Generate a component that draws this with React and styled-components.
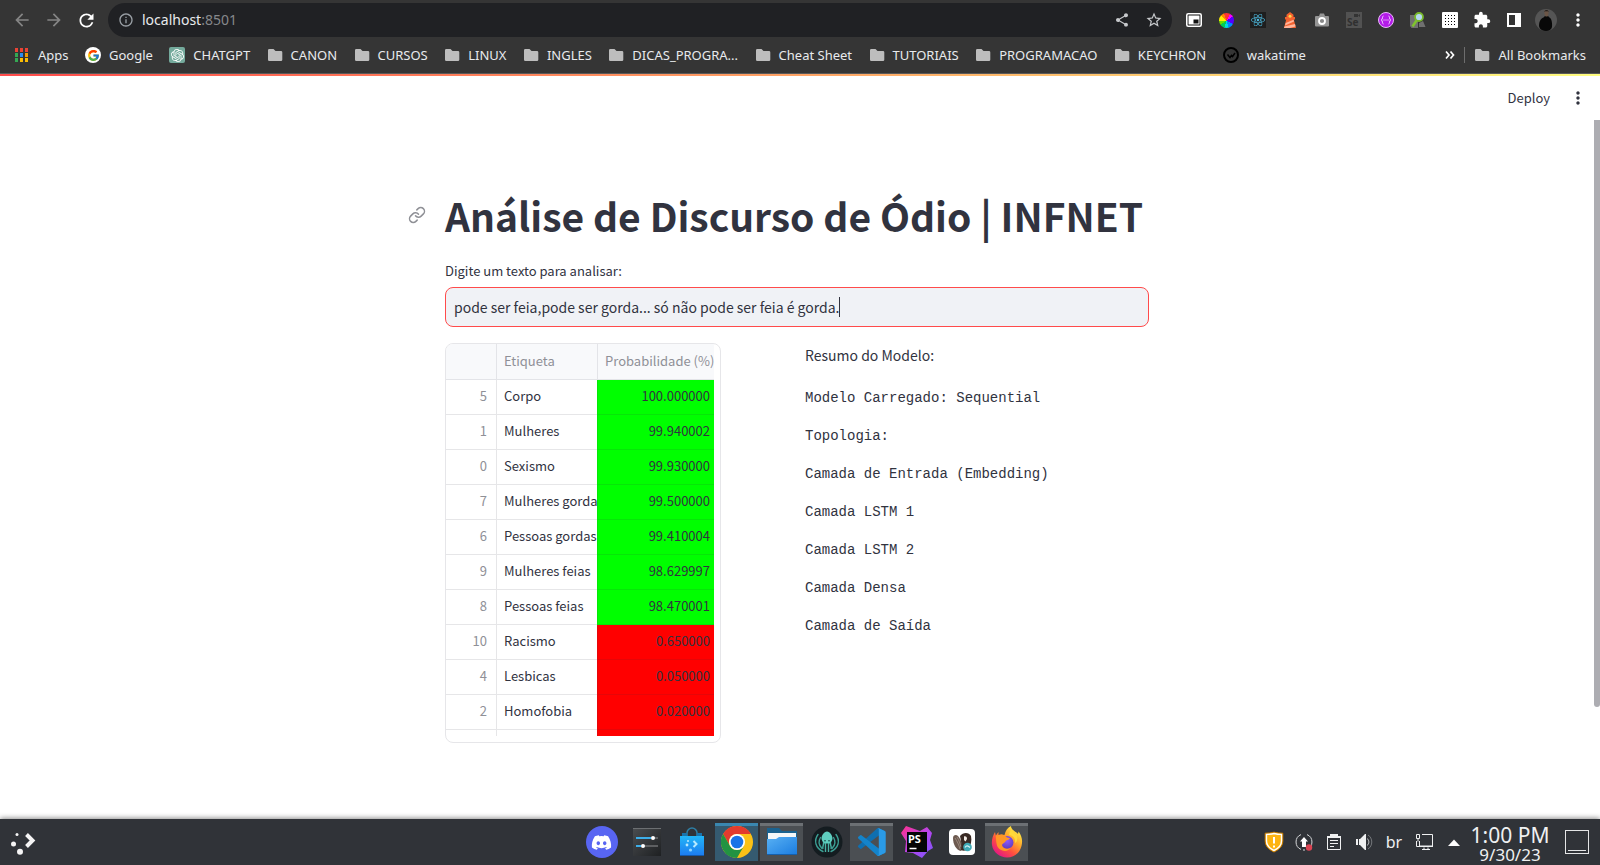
import React from "react";
import styled, { createGlobalStyle } from "styled-components";
import { FaDiscord, FaReact } from "react-icons/fa";
import { FcGoogle } from "react-icons/fc";
import { SiOpenai } from "react-icons/si";
import {
  MdArrowBack,
  MdArrowForward,
  MdRefresh,
  MdInfoOutline,
  MdShare,
  MdStarBorder,
  MdMoreVert,
  MdExtension,
} from "react-icons/md";
import { Link as LinkIcon } from "lucide-react";

const chromeFont = `"Noto Sans", "Open Sans", sans-serif`;
const appFont = `"Noto Sans CJK JP", "Noto Sans", sans-serif`;
const monoFont = `"Liberation Mono", monospace`;

const GlobalStyle = createGlobalStyle`
  * { box-sizing: border-box; }
  body { margin: 0; background: #ffffff; font-family: ${appFont}; color: #31333f; }
  button, input { font: inherit; color: inherit; margin: 0; padding: 0; border: 0; background: none; }
  a { color: inherit; text-decoration: none; }
  svg { display: block; flex: none; }
`;

const Desktop = styled.div`
  display: flex;
  flex-direction: column;
  min-height: 100vh;
`;

/* ---------- browser ---------- */

const BrowserBar = styled.header`
  background: #353535;
  border-bottom: 1px solid #5a5a5a;
  color: #e8eaed;
  font-family: ${chromeFont};
`;

const NavRow = styled.div`
  display: flex;
  align-items: center;
  height: 40px;
  padding: 0 6px;
`;

const ToolButton = styled.button`
  display: flex;
  align-items: center;
  justify-content: center;
  flex: none;
  width: 32px;
  height: 32px;
  color: ${(p) => p.$color || "#ffffff"};
`;

const AddressBar = styled.div`
  display: flex;
  align-items: center;
  flex: 1;
  height: 34px;
  margin: 0 6px;
  padding: 0 2px 0 10px;
  border-radius: 17px;
  background: #202124;
`;

const Address = styled.div`
  flex: 1;
  display: flex;
  align-items: center;
  margin-left: 8px;
  font-size: 14px;
  line-height: 20px;
  color: #e8eaed;
`;

const Port = styled.span`
  color: #86888b;
`;

const BookmarkRow = styled.nav`
  display: flex;
  align-items: center;
  justify-content: space-between;
  height: 33px;
  padding: 0 14px 3px;
  font-size: 13px;
  line-height: 20px;
`;

const BookmarkList = styled.div`
  display: flex;
  flex: 1;
  justify-content: space-between;
  max-width: 1292px;
`;

const BookmarkExtras = styled.div`
  display: flex;
  align-items: center;
`;

const Bookmark = styled.a`
  display: flex;
  align-items: center;
  gap: 8px;
  white-space: nowrap;
`;

const MoreBookmarks = styled.button`
  display: flex;
  width: 28px;
  height: 24px;
  align-items: center;
  justify-content: center;
`;

const Divider = styled.span`
  width: 1px;
  height: 16px;
  margin-right: 9px;
  background: #6d6d6d;
`;

/* ---------- streamlit page ---------- */

const Page = styled.div`
  flex: 1;
  display: flex;
  flex-direction: column;
  background: #ffffff;
`;

const Rainbow = styled.div`
  height: 2px;
  background: linear-gradient(90deg, #ff4b4b, #fffd80);
`;

const AppHeader = styled.div`
  display: flex;
  align-items: center;
  justify-content: flex-end;
  height: 44px;
  padding-right: 12px;
  gap: 18px;
`;

const DeployButton = styled.button`
  font-size: 13px;
  line-height: 20px;
`;

const MenuButton = styled.button`
  width: 20px;
  height: 20px;
  display: flex;
  align-items: center;
  justify-content: center;
`;

const ScrollRow = styled.div`
  flex: 1;
  display: flex;
`;

const Main = styled.main`
  flex: 1;
  padding: 67px 16px 76px;
`;

const Block = styled.div`
  max-width: 704px;
  margin: 0 auto;
`;

const Rail = styled.div`
  width: 6px;
`;

const Thumb = styled.div`
  height: 84%;
  border-radius: 0 0 3px 3px;
  background: #adadb2;
`;

const TitleRow = styled.div`
  display: flex;
  align-items: center;
  margin-left: -37px;
  margin-bottom: 18px;
`;

const TitleAnchor = styled.a`
  flex: none;
  width: 37px;
  color: #8f9096;
`;

const Title = styled.h1`
  margin: 0;
  font-size: 39px;
  line-height: 56px;
  font-weight: 700;
  white-space: nowrap;
`;

const FieldLabel = styled.label`
  display: block;
  margin-bottom: 6px;
  font-size: 13px;
  line-height: 20px;
`;

const Field = styled.div`
  display: flex;
  align-items: center;
  height: 40px;
  padding: 0 8px;
  margin-bottom: 16px;
  border: 1px solid #ff4b4b;
  border-radius: 8px;
  background: #f0f2f6;
`;

const TextInput = styled.input`
  field-sizing: content;
  max-width: 100%;
  font-size: 14px;
  line-height: 24px;
  outline: none;
`;

const Caret = styled.span`
  width: 1px;
  height: 20px;
  background: #31333f;
`;

const Columns = styled.div`
  display: grid;
  grid-template-columns: 1fr 1fr;
  gap: 16px;
`;

const GridFrame = styled.div`
  width: 276px;
  height: 400px;
  padding: 0 6px 6px 0;
  border: 1px solid #e6e6e9;
  border-radius: 8px;
  overflow: hidden;
`;

const GridViewport = styled.div`
  height: 100%;
  overflow: hidden;
`;

const DataTable = styled.table`
  width: 100%;
  table-layout: fixed;
  border-collapse: separate;
  border-spacing: 0;
  font-size: 13px;
  line-height: 20px;
`;

const HeadCell = styled.th`
  width: ${(p) => p.$width};
  height: 36px;
  padding: 0 0 2px 7px;
  border-bottom: 1px solid #e3e4e8;
  border-left: ${(p) => (p.$first ? "0" : "1px solid #e3e4e8")};
  background: #f8f9fb;
  color: #8f9097;
  font-weight: 400;
  text-align: left;
  white-space: nowrap;
`;

const Cell = styled.td`
  height: 35px;
  padding: 0 4px 2px 7px;
  border-bottom: 1px solid rgba(49, 51, 63, 0.12);
  border-left: 1px solid rgba(49, 51, 63, 0.12);
  background: ${(p) => p.$fill || "transparent"};
  text-align: ${(p) => p.$align || "left"};
  white-space: nowrap;
  overflow: hidden;
`;

const IndexCell = styled(Cell)`
  padding-right: 9px;
  border-left: 0;
  color: #8f9097;
`;

const Summary = styled.section`
  display: flex;
  flex-direction: column;
  gap: 16px;
`;

const SummaryTitle = styled.p`
  margin: 0 0 4px;
  font-size: 14px;
  line-height: 24px;
`;

const CodeLine = styled.p`
  margin: 0;
  font-family: ${monoFont};
  font-size: 14px;
  line-height: 22px;
  white-space: nowrap;
`;

/* ---------- desktop panel ---------- */

const Panel = styled.footer`
  position: relative;
  display: grid;
  grid-template-columns: 1fr auto 1fr;
  align-items: center;
  height: 46px;
  background: #303338;
  box-shadow: 0 -1px 5px rgba(0, 0, 0, 0.45);
  color: #eff0f1;
  font-family: ${chromeFont};
`;

const Launcher = styled.button`
  display: flex;
  width: 46px;
  height: 46px;
  align-items: center;
  justify-content: center;
`;

const Tasks = styled.div`
  display: flex;
  gap: 2px;
  margin-left: 8px;
`;

const Task = styled.button`
  display: flex;
  align-items: center;
  justify-content: center;
  width: 43px;
  height: 38px;
  border-top: 3px solid
    ${(p) => (p.$state === "active" ? "#3a87b0" : p.$state === "open" ? "#6c7074" : "transparent")};
  border-bottom: 3px solid
    ${(p) => (p.$state === "active" ? "#355a70" : p.$state === "open" ? "#4b4f53" : "transparent")};
  background: ${(p) =>
    p.$state === "active" ? "#355a70" : p.$state === "open" ? "#4b4f53" : "transparent"};
`;

const Tray = styled.div`
  display: flex;
  align-items: center;
  justify-content: flex-end;
  padding-right: 11px;
`;

const TrayButton = styled.button`
  display: flex;
  align-items: center;
  justify-content: center;
  width: 30px;
  height: 38px;
  font-size: 16px;
  line-height: 24px;
`;

const Clock = styled.time`
  display: flex;
  flex-direction: column;
  align-items: center;
  width: 82px;
  padding-top: 3px;
  margin-right: 14px;
  white-space: nowrap;
`;

const Hour = styled.span`
  font-size: 21px;
  line-height: 22px;
`;

const Day = styled.span`
  font-size: 17px;
  line-height: 18px;
`;

/* ---------- drawings ---------- */

const Svg = ({ size = 16, box = 16, children }) => (
  <svg width={size} height={size} viewBox={`0 0 ${box} ${box}`} fill="none" aria-hidden="true">
    {children}
  </svg>
);

const AppsIcon = () => {
  const colors = ["#ea4335", "#ea4335", "#ea4335", "#34a853", "#2a8bf2", "#f29900", "#34a853", "#fbbc04", "#fbbc04"];
  return (
    <Svg>
      {colors.map((c, i) => (
        <rect key={i} x={1 + (i % 3) * 5} y={1 + Math.floor(i / 3) * 5} width="3" height="4" fill={c} />
      ))}
    </Svg>
  );
};

const GoogleBadge = styled.span`
  display: flex;
  align-items: center;
  justify-content: center;
  width: 16px;
  height: 16px;
  border-radius: 8px;
  background: #ffffff;
`;

const ChatBadge = styled.span`
  display: flex;
  align-items: center;
  justify-content: center;
  width: 16px;
  height: 16px;
  border-radius: 2px;
  background: #74aa9c;
  color: #ffffff;
`;

const Folder = () => (
  <Svg>
    <path d="M2.300 2h4.200l2 2H14a1.300 1.300 0 0 1 1.300 1.300V12.700A1.300 1.300 0 0 1 14 14H2.300A1.300 1.300 0 0 1 1 12.700V3.300A1.300 1.300 0 0 1 2.300 2Z" fill="#bdbdbd" />
  </Svg>
);

const WakaIcon = () => (
  <Svg>
    <circle cx="8" cy="8" r="7" stroke="#000" strokeWidth="2" />
    <path d="M4.500 7.500 7 10.500l1.500-2 1 1L12 6" stroke="#000" strokeWidth="1.500" />
  </Svg>
);

const PipIcon = () => (
  <Svg>
    <rect x=".8" y="1.800" width="14.400" height="12.400" rx="1.500" fill="#111" stroke="#fff" strokeWidth="1.600" />
    <rect x="2.500" y="3.500" width="11" height="9" fill="#fff" />
    <rect x="7.500" y="7.500" width="5" height="4" fill="#111" />
  </Svg>
);

const ColorWheel = styled.span`
  width: 15px;
  height: 15px;
  border-radius: 8px;
  background: conic-gradient(#f33 0 8%, #f0f 8% 16%, #50f 16% 33%, #08f 33% 45%, #0dd 45% 55%, #0c5 55% 65%, #6d0 65% 75%, #fe0 75% 86%, #f80 86% 94%, #f33 94%);
`;

const ReactBadge = styled.span`
  display: flex;
  width: 16px;
  height: 16px;
  align-items: center;
  justify-content: center;
  background: #1e1e1e;
  color: #4db8dd;
`;

const LighthouseIcon = () => (
  <Svg>
    <path d="M4.500 5V2.800L8 0l3.500 2.800V5H13v2.500h-1.200L14 16H2l2.200-8.500H3V5Z" fill="#f4622f" />
    <circle cx="8" cy="4.200" r="1.500" fill="#ffd54a" />
    <path d="m3.700 11 7.900-3.300.4 1.800-9 3.900ZM2 16l.4-1.600 10.600-2.300.6 2.300L8 16Z" fill="#ffb59b" />
  </Svg>
);

const CameraIcon = () => (
  <Svg>
    <path d="M2 4h3l1-2.500h4L11 4h3a1 1 0 0 1 1 1v8.500a1 1 0 0 1-1 1H2a1 1 0 0 1-1-1V5a1 1 0 0 1 1-1Z" fill="#959595" />
    <circle cx="8" cy="9" r="3" fill="#888" stroke="#fff" strokeWidth="1.800" />
  </Svg>
);

const SeleniumIcon = () => (
  <Svg>
    <rect width="16" height="16" fill="#525252" />
    <path d="M8 2h4v3H8Zm4 1.500L14 2v3Z" fill="#333" />
    <text x="1" y="14" fontSize="10" fontWeight="700" fontFamily="Noto Sans, sans-serif" fill="#303030">Se</text>
  </Svg>
);

const BracesIcon = () => (
  <Svg>
    <circle cx="8" cy="8" r="7.500" fill="#b41be8" stroke="#e7b9f8" />
    <path d="M5.500 4C4 4 5 7.200 3.300 8 5 8.800 4 12 5.500 12M10.500 4c1.500 0 .5 3.200 2.200 4-1.700.8-.7 4-2.200 4" stroke="#f3d4ff" />
    <path d="M5.500 8h1m1 0h1m1 0h1" stroke="#fff" />
  </Svg>
);

const InspectIcon = () => (
  <Svg>
    <path d="M0 3h8v13H1.500L0 14Zm9 8 4-2 2.500 6H9Z" fill="#707070" />
    <circle cx="9" cy="5" r="4" fill="#b5d9ef" stroke="#78b82a" strokeWidth="1.800" />
    <path d="m6.500 8.500-4 6" stroke="#7fc32e" strokeWidth="2.500" />
  </Svg>
);

const DotsGridIcon = () => (
  <Svg>
    <rect width="16" height="16" rx="1" fill="#fff" />
    {[0, 1, 2, 3].map((r) =>
      [0, 1, 2, 3].map((c) => (
        <rect key={`${r}${c}`} x={3 + c * 3} y={3 + r * 3} width="1" height="1" fill="#000" />
      ))
    )}
  </Svg>
);

const SidePanelIcon = () => (
  <Svg>
    <rect x="1" y="1" width="14" height="14" fill="#fff" />
    <rect x="3" y="3" width="6" height="10" fill="#333" />
  </Svg>
);

const ProfileIcon = () => (
  <Svg size={22} box={22}>
    <circle cx="11" cy="11" r="11" fill="#555" />
    <path d="M8.500 8.500 10 7h3l1.500 1.500c2 .8 3 5.500 2.500 9.500-.5 2.500-3 4-6 4s-6-1.500-6.800-4C3.500 14 5.500 9 8.500 8.500Z" fill="#080808" />
    <path d="M9.500 1.500c1-1 3.200-1 4 0 .4 1.500 0 4.500-1 6h-2c-1-1.500-1.500-4-1-6Z" fill="#6b5647" />
    <path d="M9.300 3c0-2.500 4.400-2.500 4.400 0l-.7-.7h-3Z" fill="#111" />
  </Svg>
);

const ChevronsIcon = () => (
  <Svg size={10} box={10}>
    <path d="m1 1.500 3 3.500-3 3.500M5.500 1.500l3 3.500-3 3.500" stroke="#fff" strokeWidth="1.700" />
  </Svg>
);

const LauncherIcon = () => (
  <Svg size={26} box={26}>
    <path d="m16.500 5.500 6 6-6 6" stroke="#f5f5f5" strokeWidth="4" />
    <circle cx="7" cy="5.500" r="1.500" fill="#f5f5f5" />
    <circle cx="3.500" cy="15" r="2.500" fill="#f5f5f5" />
    <circle cx="10" cy="22.800" r="3" fill="#f5f5f5" />
  </Svg>
);

const DiscordBadge = styled.span`
  display: flex;
  width: 32px;
  height: 32px;
  align-items: center;
  justify-content: center;
  border-radius: 16px;
  background: #5865f2;
  color: #ffffff;
`;

const SettingsIcon = () => (
  <Svg size={32} box={32}>
    <defs>
      <linearGradient id="set" x1="0" y1="0" x2="1" y2="1">
        <stop stopColor="#4a4d50" />
        <stop offset="1" stopColor="#1e2022" />
      </linearGradient>
    </defs>
    <rect x="2" y="2" width="28" height="28" fill="url(#set)" />
    <path d="M2 2.500h28" stroke="#6c6f72" />
    <path d="M22 12h5M12 20h15" stroke="#5d5f61" strokeWidth="2" />
    <path d="M5 12h15M5 20h5" stroke="#3daee9" strokeWidth="2" />
    <circle cx="22" cy="12" r="2" fill="#fff" />
    <circle cx="12" cy="20" r="2" fill="#fff" />
  </Svg>
);

const BagIcon = () => (
  <Svg size={32} box={32}>
    <defs>
      <linearGradient id="bag" x1="0" y1="0" x2="0" y2="1">
        <stop stopColor="#22b6f8" />
        <stop offset="1" stopColor="#1d7df0" />
      </linearGradient>
    </defs>
    <path d="M11 10V7a5 5 0 0 1 10 0v3" stroke="#2d7fa6" strokeWidth="1.500" />
    <path d="M6 7h5v4H6Zm15 0h5v4h-5Z" fill="#1874ad" />
    <path d="M4 10h24v19H4Z" fill="url(#bag)" />
    <path d="M4 29h24v1H4Z" fill="#1458a8" />
    <path d="m17.500 15 3 3-3 3" stroke="#b7e9ff" strokeWidth="2" />
    <circle cx="12" cy="15" r="1" fill="#b7e9ff" />
    <circle cx="11" cy="19" r="1.400" fill="#b7e9ff" />
    <circle cx="14.500" cy="24" r="1.600" fill="#8fd6ff" />
  </Svg>
);

const ChromeIcon = () => (
  <Svg size={32} box={32}>
    <circle cx="16" cy="16" r="16" fill="#fbc116" />
    <path d="M2.140 8A16 16 0 0 1 29.860 8H16a8 8 0 0 0-6.930 12Z" fill="#e33b2e" />
    <path d="M2.140 8A16 16 0 0 0 16 32l6.930-12A8 8 0 0 1 9.070 20Z" fill="#229342" />
    <circle cx="16" cy="16" r="8" fill="#fff" />
    <circle cx="16" cy="16" r="6.300" fill="#1a73e8" />
  </Svg>
);

const FilesIcon = () => (
  <Svg size={32} box={32}>
    <defs>
      <linearGradient id="fold" x1="0" y1="0" x2="1" y2="1">
        <stop stopColor="#58b0f3" />
        <stop offset="1" stopColor="#1a7ce0" />
      </linearGradient>
    </defs>
    <path d="M1 2h12l3 3h15v12H1Z" fill="#1b628f" />
    <path d="M2 7h28v8H2Z" fill="#f5f7f8" />
    <path d="M1 13h9l3-2h18v18H1Z" fill="url(#fold)" />
    <path d="M1 28h30v1H1Z" fill="#1560ac" />
  </Svg>
);

const KrakenIcon = () => (
  <Svg size={32} box={32}>
    <circle cx="16" cy="16" r="15.500" fill="#141c20" />
    <path d="M16 5.500c3 0 5.500 4 5.500 7 0 2-1.500 3-2 5h-7c-.5-2-2-3-2-5 0-3 2.500-7 5.500-7Z" fill="#5fcfc0" />
    <path d="M14.500 17v9M17.500 17v9M12.500 16.500c.5 3-1.500 4-.5 6.500M19.500 16.500c-.5 3 1.500 4 .5 6.500" stroke="#48b3a6" strokeWidth="1.400" />
    <path d="M7 8.500c-4.500 6-2.500 13.500 5 17M25 8.500c4.500 6 2.500 13.500-5 17M9.500 11.500c-2.500 4-1.500 8 1.500 11M22.500 11.500c2.500 4 1.500 8-1.500 11" stroke="#3c9f94" strokeWidth="1.400" strokeLinecap="round" />
    <circle cx="14" cy="14.800" r=".8" fill="#163b3a" />
    <circle cx="18" cy="14.800" r=".8" fill="#163b3a" />
  </Svg>
);

const CodeIcon = () => (
  <Svg size={28} box={100}>
    <path d="M96 11 75 1a6 6 0 0 0-7 1L1.300 62.600a4 4 0 0 0 0 6l5.500 5a4 4 0 0 0 5.300.2l81-61.600c2.700-2 6.600-.1 6.600 3.300v-.2A6 6 0 0 0 96 11Z" fill="#0f6fb0" />
    <path d="M96 89 75 99a6 6 0 0 1-7-1L1.300 37.400a4 4 0 0 1 0-6l5.500-5a4 4 0 0 1 5.300-.2l81 61.600c2.700 2 6.600.1 6.600-3.300v.2A6 6 0 0 1 96 89Z" fill="#1484cb" />
    <path d="M75 99a6 6 0 0 1-7-1c2.300 2.300 6.300.6 6.300-2.600V4.600c0-3.200-4-4.900-6.300-2.600a6 6 0 0 1 7-1l20.700 10A6 6 0 0 1 99 16.300v67.400a6 6 0 0 1-3.300 5.300Z" fill="#2a9ae6" />
  </Svg>
);

const PhpStormIcon = () => (
  <Svg size={32} box={32}>
    <defs>
      <linearGradient id="storm" x1="0" y1="0" x2="1" y2="1">
        <stop stopColor="#ff318c" />
        <stop offset=".55" stopColor="#b345f1" />
        <stop offset="1" stopColor="#765af8" />
      </linearGradient>
    </defs>
    <path d="M0 7 5 0l14 5 7-4 5 6-2 7 3 8-5 3-6 7-9-5-8-1 1-11Z" fill="url(#storm)" />
    <rect x="6" y="6" width="20" height="20" fill="#050505" />
    <text x="7" y="17" fontSize="11" fontWeight="700" fontFamily="Noto Sans, sans-serif" fill="#fff">PS</text>
    <path d="M8.500 22.500h7" stroke="#fff" strokeWidth="1.500" />
  </Svg>
);

const DbeaverIcon = () => (
  <Svg size={26} box={26}>
    <rect width="26" height="26" rx="4" fill="#fff" />
    <path d="M4 9c0-3 3-4 5-2 2 2 3 5 4 8 1 3 0 6-1 7-5-1-8-7-8-13Z" fill="#6d5a50" />
    <path d="M6 9c2 3 4 7 5 11M8 8c2 3 3 7 4 10" stroke="#a39285" strokeWidth=".8" />
    <path d="M11 7c3-4 9-4 11 0 1 5 0 9-3 13-2 2-5 2-7 1 1-5 0-9-1-14Z" fill="#3a2a24" />
    <path d="M15 7.500c2-.5 3 .5 3 2.500l-1.500 2.500L15 11Z" fill="#f3ece6" />
    <circle cx="18.500" cy="18" r="4.300" fill="#3fa9b5" />
    <path d="M16 18.500c1.500-2.500 3-2 5 0" stroke="#d6f2f4" strokeWidth="1.200" />
  </Svg>
);

const FirefoxIcon = () => (
  <Svg size={32} box={32}>
    <defs>
      <linearGradient id="fox" x1=".85" y1=".1" x2=".2" y2=".95">
        <stop stopColor="#fff044" />
        <stop offset=".35" stopColor="#ffa52b" />
        <stop offset=".65" stopColor="#ff4f3f" />
        <stop offset="1" stopColor="#e31587" />
      </linearGradient>
      <radialGradient id="globe" cx=".5" cy=".35" r=".7">
        <stop stopColor="#9059ff" />
        <stop offset="1" stopColor="#5b3bb8" />
      </radialGradient>
    </defs>
    <path d="M20 0c0 4 5 5.500 7 8l.6-2.500C31 10 31.800 15 30.500 20 28.800 27 23 31.500 16 31.500S2 26.500 1 19c-.6-5 .7-9 3-13l.8 3.500L7.500 6v3c2-.8 4-.8 6 0 1-4 3-7.500 6.500-9Z" fill="url(#fox)" />
    <circle cx="16" cy="16.500" r="6.500" fill="url(#globe)" />
    <path d="M4.800 9.500 7.500 9c3-1.200 6-.6 8.500 2.500l3 .8c-.8 1.800-4 1.800-4.500 3.200-1 2-3 1.500-3.500 3.500.5 3.500 5.500 5 9 2.500-3 5.500-12 4-14-2-1-4-1-7-1.200-10Z" fill="#ff9726" />
    <path d="M18 9c4 0 7 4 6 8 2-1 3-4 2-7-2-3-5-4-5.500-7-1.500 2-2 4-2.500 6Z" fill="#ffd93a" />
  </Svg>
);

const ShieldIcon = () => (
  <Svg size={22} box={22}>
    <path d="M11 1.200c3 .8 6 1 8.800 1V10c0 5-3.500 8.500-8.800 11C5.700 18.500 2.200 15 2.200 10V2.200c2.800 0 5.800-.2 8.800-1Z" fill="#fdb412" stroke="#c77a00" strokeWidth="1" />
    <path d="M11 2.500c2.700.7 5 .9 7.500.9V10c0 4.300-3 7.300-7.500 9.500C6.500 17.300 3.500 14.300 3.500 10V3.400c2.500 0 4.800-.2 7.500-.9Z" stroke="#fff" strokeWidth="1.400" />
    <path d="M11 6v6.500M11 14.500v2" stroke="#fff" strokeWidth="2" />
  </Svg>
);

const UpdateIcon = () => (
  <Svg size={18} box={18}>
    <path d="M6 1.600A8 8 0 0 0 6 16.400M12 1.600A8 8 0 0 1 12 16.400M8 17h2" stroke="#d5d7d9" />
    <path d="m9 4 4 4.500h-2V14H7V8.500H5Z" fill="#fff" />
    <circle cx="14" cy="14.500" r="3.200" fill="#da4453" />
  </Svg>
);

const ClipboardIcon = () => (
  <Svg size={16} box={16}>
    <path d="M1.500 3v12.500h13V3" stroke="#eff0f1" />
    <path d="M4 0h8v2h3v2H1V2h3Z" fill="#eff0f1" />
    <path d="M4 6.500h8M4 9.500h8M4 12.500h4" stroke="#eff0f1" />
  </Svg>
);

const VolumeIcon = () => (
  <Svg size={18} box={18}>
    <path d="M1 6h2v6H1ZM4 6h1l5-5h1v16h-1l-5-5H4Z" fill="#eff0f1" />
    <path d="M12 5.500c2.500 1.500 2.500 5.500 0 7" stroke="#b8babc" />
    <path d="M13 2c5 3 5 11 0 14" stroke="#75787c" />
  </Svg>
);

const NetworkIcon = () => (
  <Svg size={18} box={18}>
    <path d="M7 1.500h10.500v12H4.500V8" stroke="#eff0f1" />
    <path d="M4 12.500h14V14H4Z" fill="#eff0f1" />
    <path d="M1.500 1.500h3v4h-3ZM3 5.500v3M1.500 8v5.500h2.500M9 14.500v2h4v-2M7 16.500h8" stroke="#eff0f1" />
  </Svg>
);

const ArrowUpIcon = () => (
  <Svg size={14} box={14}>
    <path d="M1 11 7 4.500 13 11Z" fill="#fcfcfc" />
  </Svg>
);

const DesktopIcon = () => (
  <Svg size={24} box={24}>
    <rect x=".5" y=".5" width="23" height="23" stroke="#e4e5e6" />
    <path d="M3 20.500h18" stroke="#e4e5e6" />
  </Svg>
);

/* ---------- data ---------- */

const bookmarks = [
  ["Apps", <AppsIcon />],
  ["Google", <GoogleBadge><FcGoogle size={13} /></GoogleBadge>],
  ["CHATGPT", <ChatBadge><SiOpenai size={13} /></ChatBadge>],
  ["CANON"],
  ["CURSOS"],
  ["LINUX"],
  ["INGLES"],
  ["DICAS_PROGRA..."],
  ["Cheat Sheet"],
  ["TUTORIAIS"],
  ["PROGRAMACAO"],
  ["KEYCHRON"],
  ["wakatime", <WakaIcon />],
];

const extensions = [
  ["Picture in picture", <PipIcon />],
  ["Color picker", <ColorWheel />],
  ["React tools", <ReactBadge><FaReact size={14} /></ReactBadge>],
  ["Lighthouse", <LighthouseIcon />],
  ["Screenshot", <CameraIcon />],
  ["Selenium", <SeleniumIcon />],
  ["JSON viewer", <BracesIcon />],
  ["Inspector", <InspectIcon />],
  ["Grid", <DotsGridIcon />],
  ["Extensions", <MdExtension size={18} />],
  ["Side panel", <SidePanelIcon />],
  ["Profile", <ProfileIcon />],
  ["Menu", <MdMoreVert size={20} />],
];

const rows = [
  ["5", "Corpo", "100.000000", true],
  ["1", "Mulheres", "99.940002", true],
  ["0", "Sexismo", "99.930000", true],
  ["7", "Mulheres gordas", "99.500000", true],
  ["6", "Pessoas gordas", "99.410004", true],
  ["9", "Mulheres feias", "98.629997", true],
  ["8", "Pessoas feias", "98.470001", true],
  ["10", "Racismo", "0.650000", false],
  ["4", "Lesbicas", "0.050000", false],
  ["2", "Homofobia", "0.020000", false],
  ["", "", "", false],
];

const layers = [
  "Modelo Carregado: Sequential",
  "Topologia:",
  "Camada de Entrada (Embedding)",
  "Camada LSTM 1",
  "Camada LSTM 2",
  "Camada Densa",
  "Camada de Saída",
];

const tasks = [
  ["Discord", <DiscordBadge><FaDiscord size={21} /></DiscordBadge>],
  ["System Settings", <SettingsIcon />],
  ["Discover", <BagIcon />],
  ["Chrome", <ChromeIcon />, "active"],
  ["Files", <FilesIcon />, "open"],
  ["GitKraken", <KrakenIcon />],
  ["Code", <CodeIcon />, "open"],
  ["PhpStorm", <PhpStormIcon />],
  ["DBeaver", <DbeaverIcon />],
  ["Firefox", <FirefoxIcon />, "open"],
];

const tray = [
  ["Security", <ShieldIcon />],
  ["Updates", <UpdateIcon />],
  ["Clipboard", <ClipboardIcon />],
  ["Volume", <VolumeIcon />],
  ["Keyboard layout", "br"],
  ["Network", <NetworkIcon />],
  ["Show hidden icons", <ArrowUpIcon />],
];

export default function App() {
  const [text, setText] = React.useState("pode ser feia,pode ser gorda... só não pode ser feia é gorda.");
  return (
    <Desktop>
      <GlobalStyle />
      <BrowserBar>
        <NavRow>
          <ToolButton aria-label="Back" $color="#858585"><MdArrowBack size={20} /></ToolButton>
          <ToolButton aria-label="Forward" $color="#858585"><MdArrowForward size={20} /></ToolButton>
          <ToolButton aria-label="Reload"><MdRefresh size={21} /></ToolButton>
          <AddressBar>
            <MdInfoOutline size={16} color="#9aa0a6" />
            <Address>localhost<Port>:8501</Port></Address>
            <ToolButton aria-label="Share" $color="#c7c9cc"><MdShare size={16} /></ToolButton>
            <ToolButton aria-label="Bookmark this tab" $color="#c7c9cc"><MdStarBorder size={18} /></ToolButton>
          </AddressBar>
          {extensions.map(([name, icon]) => (
            <ToolButton key={name} aria-label={name}>{icon}</ToolButton>
          ))}
        </NavRow>
        <BookmarkRow>
          <BookmarkList>
            {bookmarks.map(([name, icon]) => (
              <Bookmark key={name} href="#">{icon || <Folder />}{name}</Bookmark>
            ))}
          </BookmarkList>
          <BookmarkExtras>
            <MoreBookmarks aria-label="More bookmarks"><ChevronsIcon /></MoreBookmarks>
            <Divider />
            <Bookmark href="#"><Folder />All Bookmarks</Bookmark>
          </BookmarkExtras>
        </BookmarkRow>
      </BrowserBar>

      <Page>
        <Rainbow />
        <AppHeader>
          <DeployButton>Deploy</DeployButton>
          <MenuButton aria-label="Main menu"><MdMoreVert size={20} /></MenuButton>
        </AppHeader>
        <ScrollRow>
          <Main>
            <Block>
              <TitleRow>
                <TitleAnchor href="#titulo" aria-label="Link"><LinkIcon size={18} /></TitleAnchor>
                <Title id="titulo">Análise de Discurso de Ódio | INFNET</Title>
              </TitleRow>
              <FieldLabel htmlFor="texto">Digite um texto para analisar:</FieldLabel>
              <Field>
                <TextInput id="texto" value={text} onChange={(e) => setText(e.target.value)} />
                <Caret />
              </Field>
              <Columns>
                <GridFrame>
                  <GridViewport>
                    <DataTable>
                      <thead>
                        <tr>
                          <HeadCell $width="50px" $first />
                          <HeadCell $width="101px">Etiqueta</HeadCell>
                          <HeadCell $width="auto">Probabilidade (%)</HeadCell>
                        </tr>
                      </thead>
                      <tbody>
                        {rows.map(([index, label, value, high]) => (
                          <tr key={label}>
                            <IndexCell $align="right">{index}</IndexCell>
                            <Cell>{label}</Cell>
                            <Cell $align="right" $fill={high ? "#00ff00" : "#ff0000"}>{value}</Cell>
                          </tr>
                        ))}
                      </tbody>
                    </DataTable>
                  </GridViewport>
                </GridFrame>
                <Summary>
                  <SummaryTitle>Resumo do Modelo:</SummaryTitle>
                  {layers.map((line) => (
                    <CodeLine key={line}>{line}</CodeLine>
                  ))}
                </Summary>
              </Columns>
            </Block>
          </Main>
          <Rail><Thumb /></Rail>
        </ScrollRow>
      </Page>

      <Panel>
        <Launcher aria-label="Application launcher"><LauncherIcon /></Launcher>
        <Tasks>
          {tasks.map(([name, icon, state]) => (
            <Task key={name} aria-label={name} $state={state}>{icon}</Task>
          ))}
        </Tasks>
        <Tray>
          {tray.map(([name, icon]) => (
            <TrayButton key={name} aria-label={name}>{icon}</TrayButton>
          ))}
          <Clock>
            <Hour>1:00 PM</Hour>
            <Day>9/30/23</Day>
          </Clock>
          <DesktopIcon />
        </Tray>
      </Panel>
    </Desktop>
  );
}
